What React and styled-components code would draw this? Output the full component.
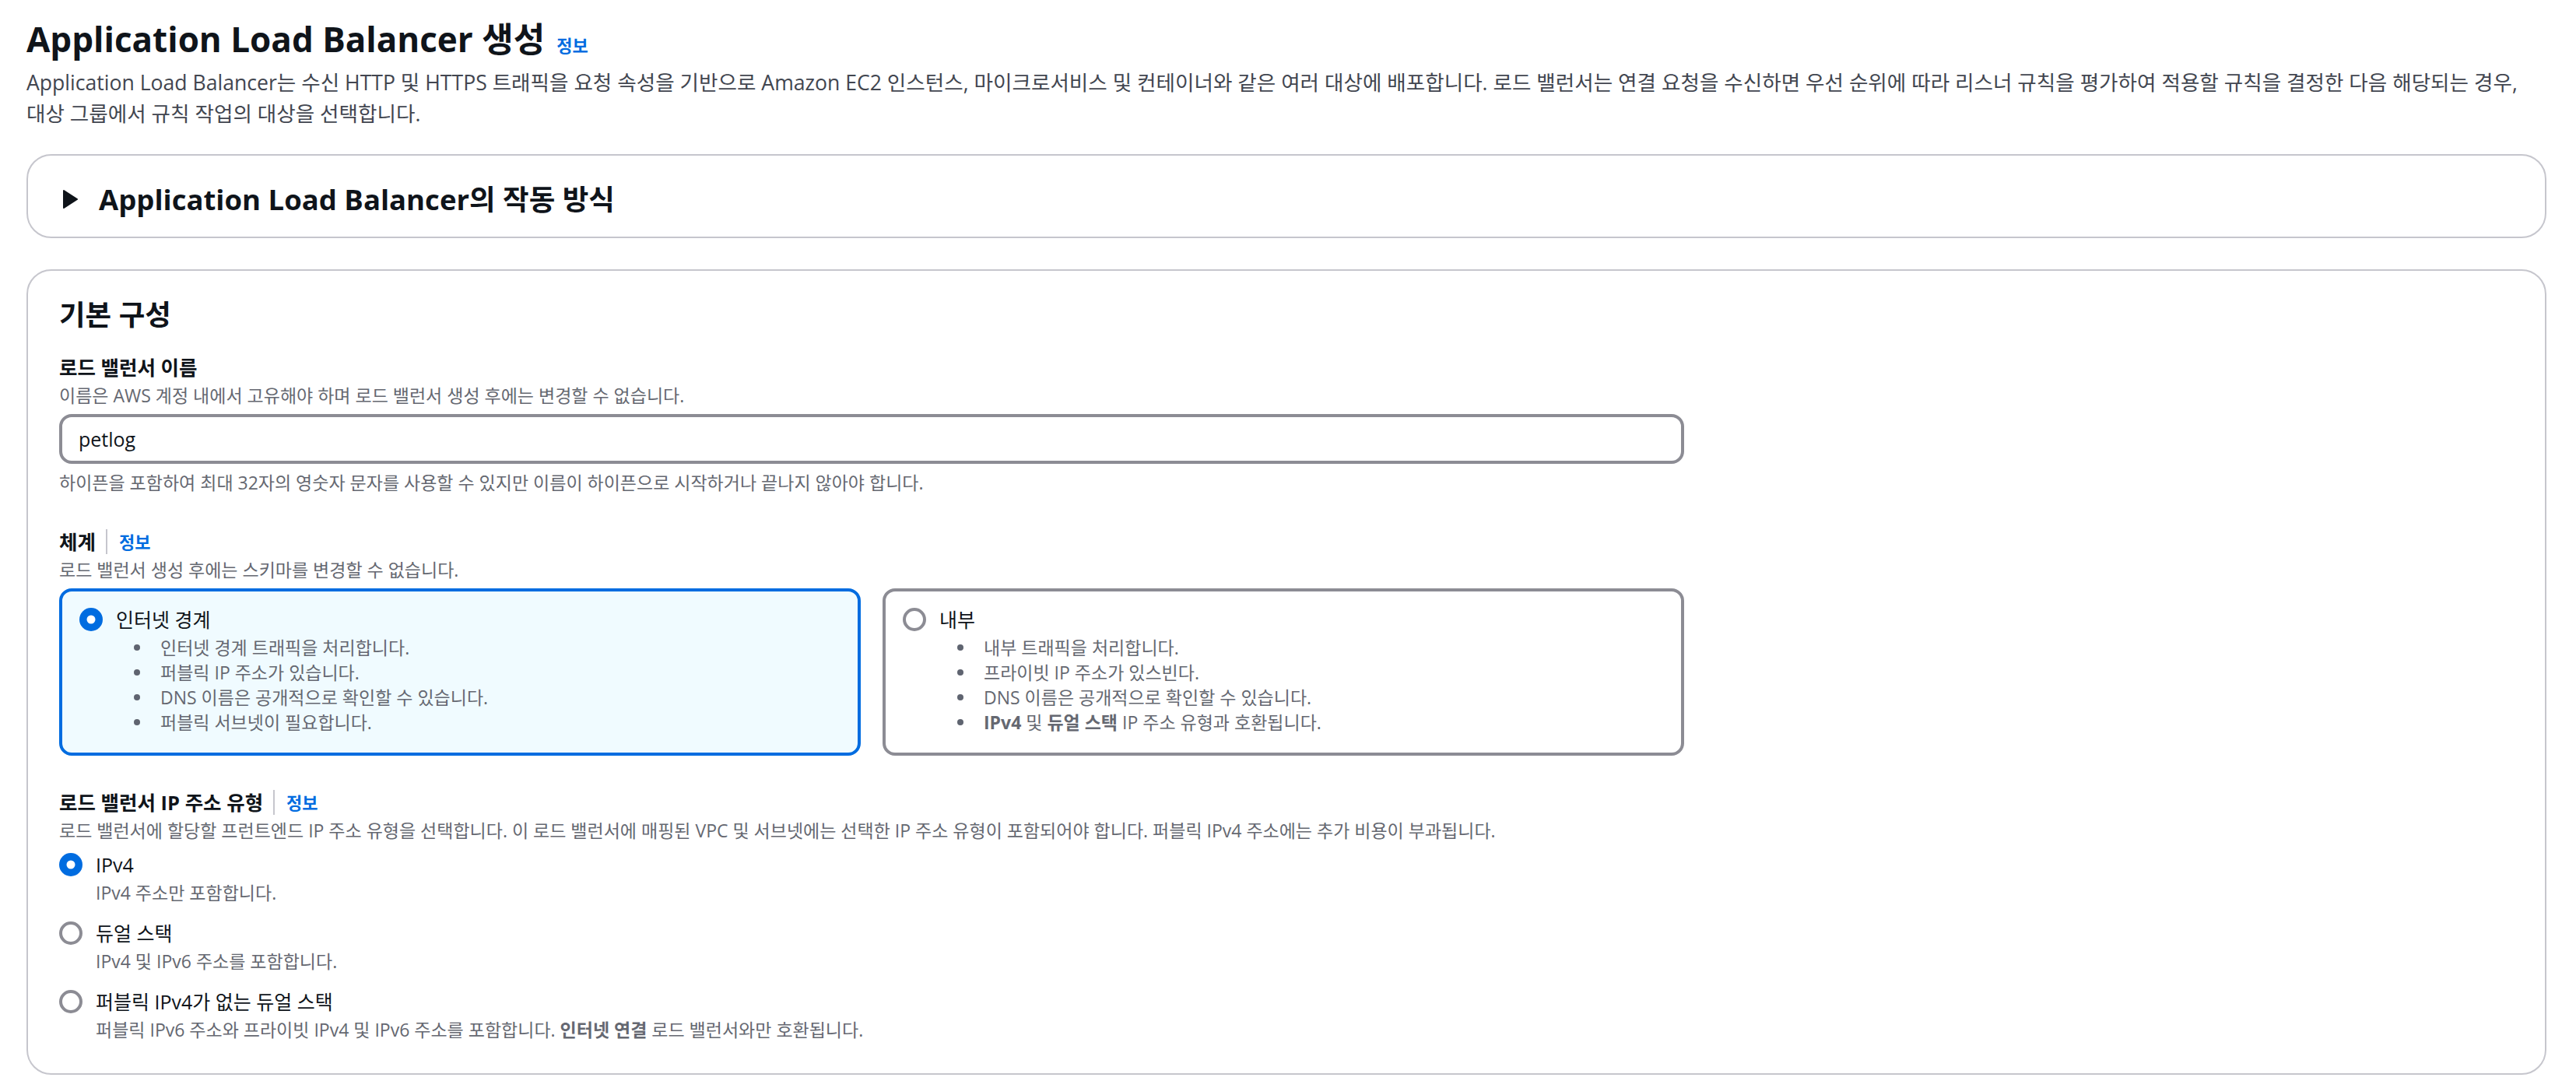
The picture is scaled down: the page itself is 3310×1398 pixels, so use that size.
import React from "react";
import styled, { createGlobalStyle } from "styled-components";

const GlobalStyle = createGlobalStyle`
  html, body { margin: 0; padding: 0; background: #ffffff; }
  body {
    font-family: "Open Sans", "Noto Sans CJK KR", sans-serif;
    color: #0f141a;
    word-break: keep-all;
    -webkit-font-smoothing: antialiased;
  }
  * { box-sizing: border-box; }
`;

const Page = styled.main`
  display: flex;
  flex-direction: column;
  padding: 20px 38px 0 34px;
`;

const PageHeader = styled.header`
  display: flex;
  flex-direction: column;
  gap: 6px;
  margin-bottom: 32px;
`;

const TitleRow = styled.div`
  display: flex;
  align-items: baseline;
  gap: 15px;
`;

const Title = styled.h1`
  margin: 0;
  font-size: 44px;
  line-height: 60px;
  font-weight: 700;
  color: #0f141a;
`;

const InfoLink = styled.a`
  font-size: 22px;
  line-height: 32px;
  font-weight: 700;
  color: #006ce0;
  text-decoration: none;
  cursor: pointer;
`;

const Lead = styled.p`
  margin: 0;
  font-size: 26.6px;
  line-height: 40px;
  color: #424650;
  word-break: keep-all;
`;

const Container = styled.section`
  border: 2px solid #c6c6cd;
  border-radius: 32px;
  background: #ffffff;
  padding: ${(p) => (p.$collapsed ? "32px 40px 24px" : "32px 40px 40px")};
  margin-top: ${(p) => p.$offset || 0}px;
`;

const ExpanderHeader = styled.div`
  display: flex;
  align-items: center;
  gap: 19px;
  cursor: pointer;
`;

const Heading = styled.h2`
  margin: 0;
  font-size: 36.5px;
  line-height: 48px;
  font-weight: 700;
  color: #0f141a;
`;

const Caret = styled.svg`
  width: 32px;
  height: 32px;
  flex: none;
`;

const Form = styled.div`
  display: flex;
  flex-direction: column;
  gap: 40px;
  margin-top: 24px;
`;

const Field = styled.div`
  display: flex;
  flex-direction: column;
  width: 2088px;
`;

const LabelRow = styled.div`
  display: flex;
  align-items: center;
  height: 40px;
`;

const Label = styled.span`
  font-size: 25.5px;
  line-height: 40px;
  font-weight: 700;
  color: #0f141a;
`;

const Divider = styled.span`
  width: 2px;
  height: 32px;
  background: #c6c6cd;
  margin: 0 15px 0 13px;
`;

const Hint = styled.div`
  font-size: 23px;
  line-height: 32px;
  color: #656871;
  margin-top: ${(p) => p.$gap || 0}px;
`;

const Strong = styled.b`
  font-weight: 700;
`;

const TextInput = styled.input`
  margin-top: 8px;
  height: 64px;
  width: 100%;
  border: 4px solid #8c8c94;
  border-radius: 16px;
  padding: 0 21px;
  font-family: inherit;
  font-size: 25px;
  color: #0f141a;
  background: #ffffff;
  outline: none;
`;

const Tiles = styled.div`
  display: grid;
  grid-template-columns: 1fr 1fr;
  gap: 28px;
  margin-top: 8px;
`;

const Tile = styled.div`
  border: 4px solid ${(p) => (p.$selected ? "#006ce0" : "#8c8c94")};
  background: ${(p) => (p.$selected ? "#f0fbff" : "#ffffff")};
  border-radius: 16px;
  padding: 16px 20px 23px 22px;
`;

const Option = styled.div`
  display: grid;
  grid-template-columns: 30px 1fr;
  column-gap: 17px;
  align-items: center;
`;

const OptionLabel = styled.span`
  font-size: 25px;
  line-height: 40px;
  color: #0f141a;
`;

const OptionBody = styled.div`
  grid-column: 2;
`;

const Bullets = styled.ul`
  margin: 0;
  padding: 0;
  list-style: none;
`;

const Bullet = styled.li`
  display: flex;
  align-items: center;
  font-size: 23px;
  line-height: 32px;
  color: #656871;

  &::before {
    content: "";
    flex: none;
    width: 8px;
    height: 8px;
    border-radius: 50%;
    background: #5f6470;
    margin: 0 26px 0 23px;
  }
`;

const RadioGroup = styled.div`
  display: flex;
  flex-direction: column;
  gap: 16px;
  margin-top: 8px;
`;

const RadioSvg = styled.svg`
  width: 30px;
  height: 30px;
  display: block;
`;

function Radio({ checked }) {
  return (
    <RadioSvg viewBox="0 0 30 30">
      {checked ? (
        <>
          <circle cx="15" cy="15" r="15" fill="#006ce0" />
          <circle cx="15" cy="15" r="5.5" fill="#ffffff" />
        </>
      ) : (
        <circle cx="15" cy="15" r="13" fill="#ffffff" stroke="#8c8c94" strokeWidth="4" />
      )}
    </RadioSvg>
  );
}

function FieldLabel({ children, info }) {
  return (
    <LabelRow>
      <Label>{children}</Label>
      {info && (
        <>
          <Divider />
          <InfoLink>정보</InfoLink>
        </>
      )}
    </LabelRow>
  );
}

const schemes = [
  {
    label: "인터넷 경계",
    selected: true,
    items: [
      "인터넷 경계 트래픽을 처리합니다.",
      "퍼블릭 IP 주소가 있습니다.",
      "DNS 이름은 공개적으로 확인할 수 있습니다.",
      "퍼블릭 서브넷이 필요합니다.",
    ],
  },
  {
    label: "내부",
    selected: false,
    items: [
      "내부 트래픽을 처리합니다.",
      "프라이빗 IP 주소가 있스빈다.",
      "DNS 이름은 공개적으로 확인할 수 있습니다.",
      <>
        <Strong>IPv4</Strong> 및 <Strong>듀얼 스택</Strong> IP 주소 유형과 호환됩니다.
      </>,
    ],
  },
];

const ipTypes = [
  { label: "IPv4", desc: "IPv4 주소만 포함합니다.", checked: true },
  { label: "듀얼 스택", desc: "IPv4 및 IPv6 주소를 포함합니다.", checked: false },
  {
    label: "퍼블릭 IPv4가 없는 듀얼 스택",
    desc: (
      <>
        퍼블릭 IPv6 주소와 프라이빗 IPv4 및 IPv6 주소를 포함합니다. <Strong>인터넷 연결</Strong> 로드
        밸런서와만 호환됩니다.
      </>
    ),
    checked: false,
  },
];

export default function App() {
  return (
    <>
      <GlobalStyle />
      <Page>
        <PageHeader>
          <TitleRow>
            <Title>Application Load Balancer 생성</Title>
            <InfoLink>정보</InfoLink>
          </TitleRow>
          <Lead>
            Application Load Balancer는 수신 HTTP 및 HTTPS 트래픽을 요청 속성을 기반으로 Amazon EC2
            인스턴스, 마이크로서비스 및 컨테이너와 같은 여러 대상에 배포합니다. 로드 밸런서는 연결 요청을
            수신하면 우선 순위에 따라 리스너 규칙을 평가하여 적용할 규칙을 결정한 다음 해당되는 경우, 대상
            그룹에서 규칙 작업의 대상을 선택합니다.
          </Lead>
        </PageHeader>

        <Container $collapsed>
          <ExpanderHeader>
            <Caret viewBox="0 0 32 32">
              <path
                d="M6 5 L23 16 L6 27 Z"
                fill="#0f141a"
                stroke="#0f141a"
                strokeWidth="2"
                strokeLinejoin="round"
              />
            </Caret>
            <Heading>Application Load Balancer의 작동 방식</Heading>
          </ExpanderHeader>
        </Container>

        <Container $offset={40}>
          <Heading>기본 구성</Heading>
          <Form>
            <Field>
              <FieldLabel>로드 밸런서 이름</FieldLabel>
              <Hint>이름은 AWS 계정 내에서 고유해야 하며 로드 밸런서 생성 후에는 변경할 수 없습니다.</Hint>
              <TextInput defaultValue="petlog" readOnly />
              <Hint $gap={8}>
                하이픈을 포함하여 최대 32자의 영숫자 문자를 사용할 수 있지만 이름이 하이픈으로 시작하거나
                끝나지 않아야 합니다.
              </Hint>
            </Field>

            <Field>
              <FieldLabel info>체계</FieldLabel>
              <Hint>로드 밸런서 생성 후에는 스키마를 변경할 수 없습니다.</Hint>
              <Tiles>
                {schemes.map((s) => (
                  <Tile key={s.label} $selected={s.selected}>
                    <Option>
                      <Radio checked={s.selected} />
                      <OptionLabel>{s.label}</OptionLabel>
                      <OptionBody>
                        <Bullets>
                          {s.items.map((item, i) => (
                            <Bullet key={i}>
                              <span>{item}</span>
                            </Bullet>
                          ))}
                        </Bullets>
                      </OptionBody>
                    </Option>
                  </Tile>
                ))}
              </Tiles>
            </Field>

            <Field>
              <FieldLabel info>로드 밸런서 IP 주소 유형</FieldLabel>
              <Hint>
                로드 밸런서에 할당할 프런트엔드 IP 주소 유형을 선택합니다. 이 로드 밸런서에 매핑된 VPC 및
                서브넷에는 선택한 IP 주소 유형이 포함되어야 합니다. 퍼블릭 IPv4 주소에는 추가 비용이
                부과됩니다.
              </Hint>
              <RadioGroup>
                {ipTypes.map((o) => (
                  <Option key={o.label}>
                    <Radio checked={o.checked} />
                    <OptionLabel>{o.label}</OptionLabel>
                    <OptionBody>
                      <Hint>{o.desc}</Hint>
                    </OptionBody>
                  </Option>
                ))}
              </RadioGroup>
            </Field>
          </Form>
        </Container>
      </Page>
    </>
  );
}
